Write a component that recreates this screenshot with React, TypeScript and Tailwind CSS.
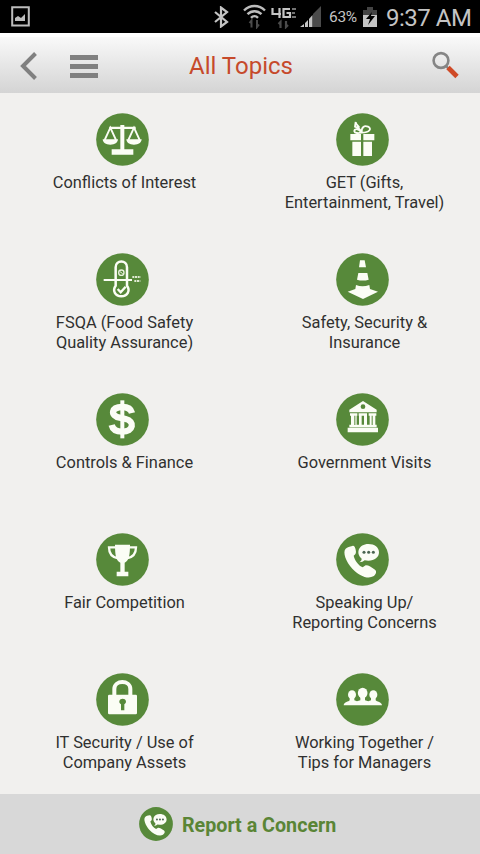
import type { ReactNode } from "react";

const GREEN = "#57893a";

function Badge({ children, size = "h-[53px] w-[53px]" }: { children: ReactNode; size?: string }) {
  return (
    <svg viewBox="42 38 159 159" className={`${size} shrink-0`} fill="#fbfdf5">
      <circle cx="121.5" cy="117.5" r="79" fill={GREEN} />
      {children}
    </svg>
  );
}

const scales = (
  <>
    <path d="M115 74h12v5h34v7h-34v61h27v16H89v-16h26V86H82v-7h33z" />
    <path d="M62 117h46c-1 10-9 16-23 16s-22-6-23-16zM133 117h46c-1 10-9 16-23 16s-22-6-23-16z" />
    <path d="M68 119 85 82l17 37M139 119l17-37 17 37" fill="none" stroke="#fbfdf5" strokeWidth="5.5" />
  </>
);

const gift = (
  <>
    <path d="M85 101h32v19H85zM124 101h33v19h-33zM91 124h26v43H91zM124 124h26v43h-26z" />
    <path
      d="M119 98c-9-16-23-13-22-5 1 6 12 6 22 4-1-18 8-22 19-18 12 5 6 18-19 18M119 96c-5-12-11-14-20-17l2-14c1 9 8 11 11 17"
      fill="none"
      stroke="#fbfdf5"
      strokeWidth="5.5"
    />
  </>
);

const thermometer = (
  <>
    <path
      d="M101 136V81c0-23 34-23 34 0v55c11 15 1 32-17 32s-28-17-17-32z"
      fill="none"
      stroke="#fbfdf5"
      strokeWidth="7.5"
    />
    <path d="M65 116h85v6H65z" />
    <circle cx="118" cy="97" r="8" fill="none" stroke="#e8f0dc" strokeWidth="4" />
    <path d="M114 94l8 6" stroke="#e8f0dc" strokeWidth="3" />
    <path d="M107 146l9 10 15-17" fill="none" stroke="#fbfdf5" strokeWidth="7" />
    <path d="M151 110h25M157 122h18" stroke="#dfe9d2" strokeWidth="6" strokeDasharray="6 2" />
  </>
);

const cone = (
  <>
    <path d="M114 60h14l4 21h-21zM109 98h27l4 20q-18 5-35 0z" />
    <path d="M102 134q19 8 40 0l2 12 24 8-45 22-46-22 23-8z" />
  </>
);

const dollar = (
  <>
    <path
      d="M150 98c-3-12-13-18-29-18-34 0-37 26-8 32l18 4c28 7 24 38-10 38-18 0-29-7-32-20"
      fill="none"
      stroke="#fbfdf5"
      strokeWidth="19"
    />
    <path d="M115 60h12v114h-12z" />
  </>
);

const bank = (
  <>
    <path d="M123 62l41 26v8H82v-8zM84 99h22v7H84zM110 99h25v7h-25zM140 99h23v7h-23zM87 106h17v28H87zM111 106h8v28h-8zM126 106h9v28h-9zM143 106h17v28h-17zM82 133h82v8H82zM77 142h91v14H77z" />
    <path d="M97 106h3v28h-3zM149 106h3v28h-3z" fill={GREEN} />
    <circle cx="123" cy="79" r="7" fill={GREEN} />
  </>
);

const trophy = (
  <>
    <path d="M99 73h45c0 32-3 47-16 54v27h11v14h-35v-14h11v-27c-13-7-16-22-16-54z" />
    <path d="M101 81H81c0 18 8 30 27 33M142 81h20c0 18-8 30-27 33" fill="none" stroke="#fbfdf5" strokeWidth="7" />
  </>
);

const phone = (
  <>
    <path d="M91 77c5-2 8 3 10 11 2 9 1 12-6 18 3 14 14 29 27 35l9-6c7-1 17 5 28 13 7 6 2 15-5 20-17 10-45-3-63-23-19-20-30-50-20-60 5-5 12-6 20-8z" />
    <path d="M139 71c19 0 32 10 32 25s-13 25-32 25l-11-1c-4 4-9 6-16 6 5-3 7-7 7-11-19-16-9-44 20-44z" />
    <circle cx="126" cy="96" r="4.6" fill="#4a6550" />
    <circle cx="140" cy="96" r="4.6" fill="#4a6550" />
    <circle cx="154" cy="96" r="4.6" fill="#4a6550" />
  </>
);

const lock = (
  <>
    <path d="M97 106V86c0-28 48-28 48 0v20" fill="none" stroke="#fbfdf5" strokeWidth="12" />
    <rect x="78" y="103" width="87" height="59" rx="4" />
    <path d="M117 132c-9-6-5-17 5-17s14 11 5 17v18h-10z" fill={GREEN} />
  </>
);

const people = (
  <>
    <ellipse cx="90" cy="103" rx="12" ry="13" />
    <ellipse cx="122" cy="98" rx="14.5" ry="15.5" />
    <ellipse cx="154" cy="103" rx="12" ry="13" />
    <path d="M83 108h14v12l8 3 10-3v-13h14v13l10 3 8-3v-12h14v12c3 5 18 4 19 15H65c1-11 15-10 18-15z" />
  </>
);

const topics: { lines: string[]; icon: ReactNode }[] = [
  { lines: ["Conflicts of Interest"], icon: scales },
  { lines: ["GET (Gifts,", "Entertainment, Travel)"], icon: gift },
  { lines: ["FSQA (Food Safety", "Quality Assurance)"], icon: thermometer },
  { lines: ["Safety, Security &", "Insurance"], icon: cone },
  { lines: ["Controls & Finance"], icon: dollar },
  { lines: ["Government Visits"], icon: bank },
  { lines: ["Fair Competition"], icon: trophy },
  { lines: ["Speaking Up/", "Reporting Concerns"], icon: phone },
  { lines: ["IT Security / Use of", "Company Assets"], icon: lock },
  { lines: ["Working Together /", "Tips for Managers"], icon: people },
];

function StatusBar() {
  return (
    <div className="flex h-[33px] items-center bg-black pl-[11px] text-[#c4c4c4]">
      <svg viewBox="0 0 19 21" className="h-[21px] w-[19px]">
        <path d="M1.2 1.2h16.6v18.4H1.2z" fill="none" stroke="#bdbdbd" strokeWidth="2" />
        <path d="M4 15v-3l3-2 3 2 4-4v7z" fill="#bdbdbd" />
      </svg>
      <svg viewBox="0 0 16 22" className="ml-[183px] h-[22px] w-[16px]" fill="none" stroke="#c4c4c4" strokeWidth="2.2">
        <path d="M2 6l12 10-6 4.500V1.500L14 6 2 16" />
      </svg>
      <svg viewBox="0 0 23 25" className="ml-[14px] h-[25px] w-[23px]" fill="none" stroke="#bdbdbd" strokeWidth="2.4">
        <path d="M1 6.500c6-6 15-6 21 0M4.500 10.200c4-4 10-4 14 0M8 13.800c2-2 5-2 7 0" />
        <path d="M8.500 23.500v-7l-2 2.500M14 16v7l2-2.500" stroke="#4b4b4b" strokeWidth="2" />
      </svg>
      <svg viewBox="0 0 26 24" className="ml-[5px] h-[24px] w-[26px]" fill="none" stroke="#c4c4c4" strokeWidth="2.2">
        <path d="M1.500 3v6H10M8.500 3v10M19 4h-6.500v8H19V8h-3.500" />
        <path d="M21 4h4M21 8h3M21 12h4" strokeWidth="1.500" stroke="#999" />
        <path d="M9.500 23v-6l-2 2M15 16v6l2-2" stroke="#4b4b4b" />
      </svg>
      <svg viewBox="0 0 22 23" className="ml-[3px] h-[23px] w-[22px]">
        <path d="M13 22V9l8-8v21z" fill="#4b4b4b" />
        <path d="M0 22h4v-3zM5 22h3v-7l-3 3zM9 22h3.500V10L9 14z" fill="#c4c4c4" />
      </svg>
      <span className="ml-[7px] w-[31px] whitespace-nowrap pt-[2px] text-[15.500px] tracking-[-0.3px]">63%</span>
      <svg viewBox="0 0 16 22" className="ml-[2px] h-[22px] w-[16px]">
        <path d="M5 1h6v3h4v5H1V4h4z" fill="#444" />
        <path d="M1 9h14v12H1z" fill="#c4c4c4" />
        <path d="M10 6l-6 7h4l-2 6 7-9H9z" fill="#000" />
      </svg>
      <span className="ml-[8px] whitespace-nowrap pt-[2px] text-[24px] leading-none tracking-[-0.500px]">9:37 AM</span>
    </div>
  );
}

function Header() {
  return (
    <header className="flex h-[60px] items-center border-t-[4px] border-white bg-gradient-to-b from-[#f9f9f9] to-[#d4d4d4] pl-[20px] pr-[21px]">
      <svg viewBox="0 0 18 28" className="mt-[2px] h-[28px] w-[18px]" fill="none" stroke="#808080" strokeWidth="4">
        <path d="M15.500 1.500 3 14l12.500 12.500" />
      </svg>
      <div className="ml-[32px] flex w-[28px] flex-col gap-[4px] pt-[3px]">
        <div className="h-[5px] bg-[#808080]" />
        <div className="h-[5px] bg-[#808080]" />
        <div className="h-[5px] bg-[#808080]" />
      </div>
      <h1 className="ml-[91px] whitespace-nowrap pt-[1px] text-[24px] text-[#c64a2b]">All Topics</h1>
      <svg viewBox="0 0 27 28" className="ml-auto h-[28px] w-[27px]" fill="none">
        <circle cx="9" cy="9.500" r="7.400" stroke="#858585" strokeWidth="2.600" />
        <path d="M14 15l3 3" stroke="#858585" strokeWidth="2.400" />
        <path d="M16 16.500l9 9" stroke="#cf4a27" strokeWidth="4.800" />
      </svg>
    </header>
  );
}

export default function App() {
  return (
    <div className="flex h-[854px] w-[480px] flex-col overflow-hidden bg-[#f1f0ee] font-['Roboto',sans-serif]">
      <StatusBar />
      <Header />
      <main className="grid h-[701px] auto-rows-[140px] grid-cols-2 pt-5">
        {topics.map((topic) => (
          <div key={topic.lines[0]} className="flex flex-col items-center pl-[9px]">
            <div className="mr-[4px]">
              <Badge>{topic.icon}</Badge>
            </div>
            <p className="mt-[6.500px] whitespace-nowrap text-center text-[16.400px] leading-5 text-[#303030]">
              {topic.lines.map((line) => (
                <span key={line} className="block">
                  {line}
                </span>
              ))}
            </p>
          </div>
        ))}
      </main>
      <footer className="flex h-[60px] items-center bg-[#d8d8d8] pl-[139px]">
        <Badge size="h-[34px] w-[34px]">{phone}</Badge>
        <span className="ml-[9px] whitespace-nowrap pt-[4px] text-[19.700px] font-bold text-[#5a8536]">Report a Concern</span>
      </footer>
    </div>
  );
}
